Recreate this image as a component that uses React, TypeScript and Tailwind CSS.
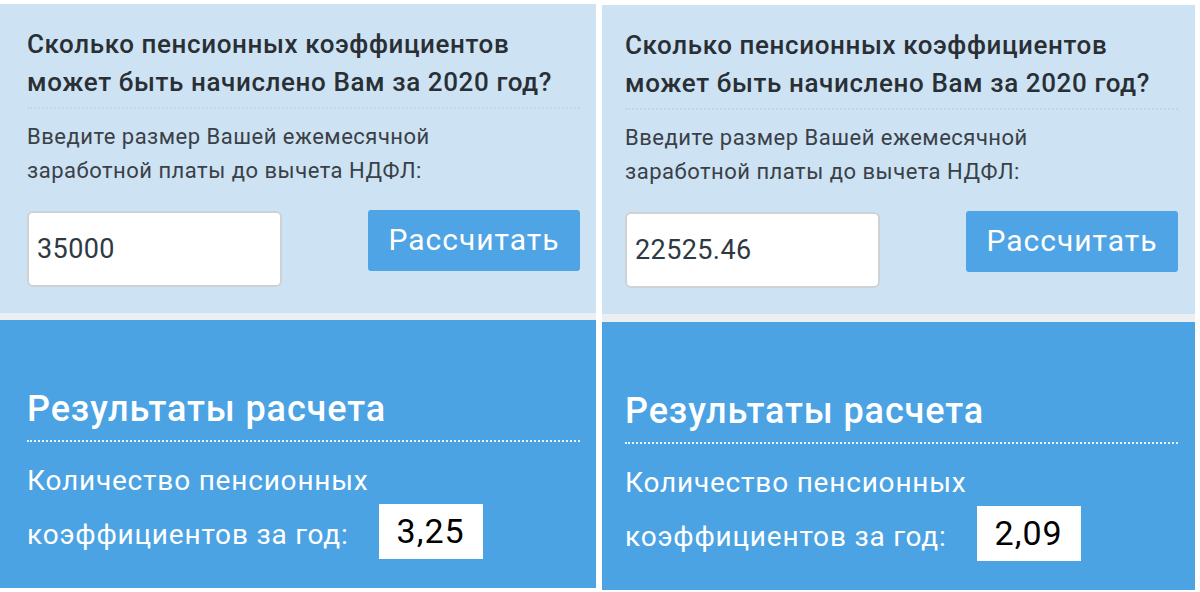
import React from "react";

type Calc = {
  salary: string;
  result: string;
  padL: string;
  padR: string;
  topOffset: string;
  topH: string;
  gapH: string;
  botH: string;
  width: string;
};

const calcs: Calc[] = [
  {
    salary: "35000",
    result: "3,25",
    padL: "pl-[27px]",
    padR: "pr-[16px]",
    topOffset: "pt-[4px]",
    topH: "h-[309px]",
    gapH: "h-[7px]",
    botH: "h-[268px]",
    width: "w-[596px]",
  },
  {
    salary: "22525.46",
    result: "2,09",
    padL: "pl-[23px]",
    padR: "pr-[17px]",
    topOffset: "pt-[5px]",
    topH: "h-[309px]",
    gapH: "h-[8px]",
    botH: "h-[268px]",
    width: "w-[593px]",
  },
];

const Panel = ({ c }: { c: Calc }) => {
  return (
    <div className={`flex flex-col ${c.width} ${c.topOffset}`}>
      {/* form block */}
      <div className={`${c.topH} bg-[#cde3f3] ${c.padL} ${c.padR} pt-[21px]`}>
        <h2 className="text-[26px] leading-[38px] tracking-[0.6px] font-medium text-[#2a2f35] pb-[6px] border-b-2 border-dotted border-[#c4d6e4]">
          Сколько пенсионных коэффициентов
          <br />
          может быть начислено Вам за 2020 год?
        </h2>
        <p className="mt-[11px] text-[22px] leading-[34px] tracking-[0.5px] text-[#3a4047]">
          Введите размер Вашей ежемесячной
          <br />
          заработной платы до вычета НДФЛ:
        </p>
        <div className="mt-[23px] flex items-start justify-between">
          <div className="w-[255px] h-[76px] bg-white border-2 border-[#cfd2d4] rounded-[6px] flex items-center pl-[8px] text-[27px] tracking-[0.4px] text-[#2e3944]">
            {c.salary}
          </div>
          <button className="mt-[-1px] w-[212px] h-[61px] bg-[#4ea4e4] rounded-[3px] text-white text-[30px] tracking-[1px] flex items-center justify-center pb-[2px]">
            Рассчитать
          </button>
        </div>
      </div>
      <div className={`${c.gapH} bg-[#eceff2]`} />
      {/* result block */}
      <div className={`${c.botH} bg-[#4ba3e4] ${c.padL} ${c.padR} pt-[68px]`}>
        <h3 className="text-[36px] leading-[42px] tracking-[0.9px] font-medium text-white pb-[10px] border-b-2 border-dotted border-[#e8f2fb]">
          Результаты расчета
        </h3>
        <div className="mt-[21px] text-[28px] leading-[36px] tracking-[0.8px] text-white">
          Количество пенсионных
        </div>
        <div className="mt-[5px] flex items-center">
          <span className="text-[28px] leading-[36px] tracking-[0.8px] text-white pt-[6px]">
            коэффициентов за год:
          </span>
          <span className="ml-[30px] w-[104px] h-[55px] bg-white flex items-center justify-center text-[34px] tracking-[1px] text-black">
            {c.result}
          </span>
        </div>
      </div>
    </div>
  );
};

export default function App() {
  return (
    <div
      className="w-[1200px] h-[592px] bg-white flex gap-[6px] overflow-hidden"
      style={{ fontFamily: "Roboto, 'Noto Sans', sans-serif" }}
    >
      {calcs.map((c, i) => (
        <Panel key={i} c={c} />
      ))}
    </div>
  );
}
